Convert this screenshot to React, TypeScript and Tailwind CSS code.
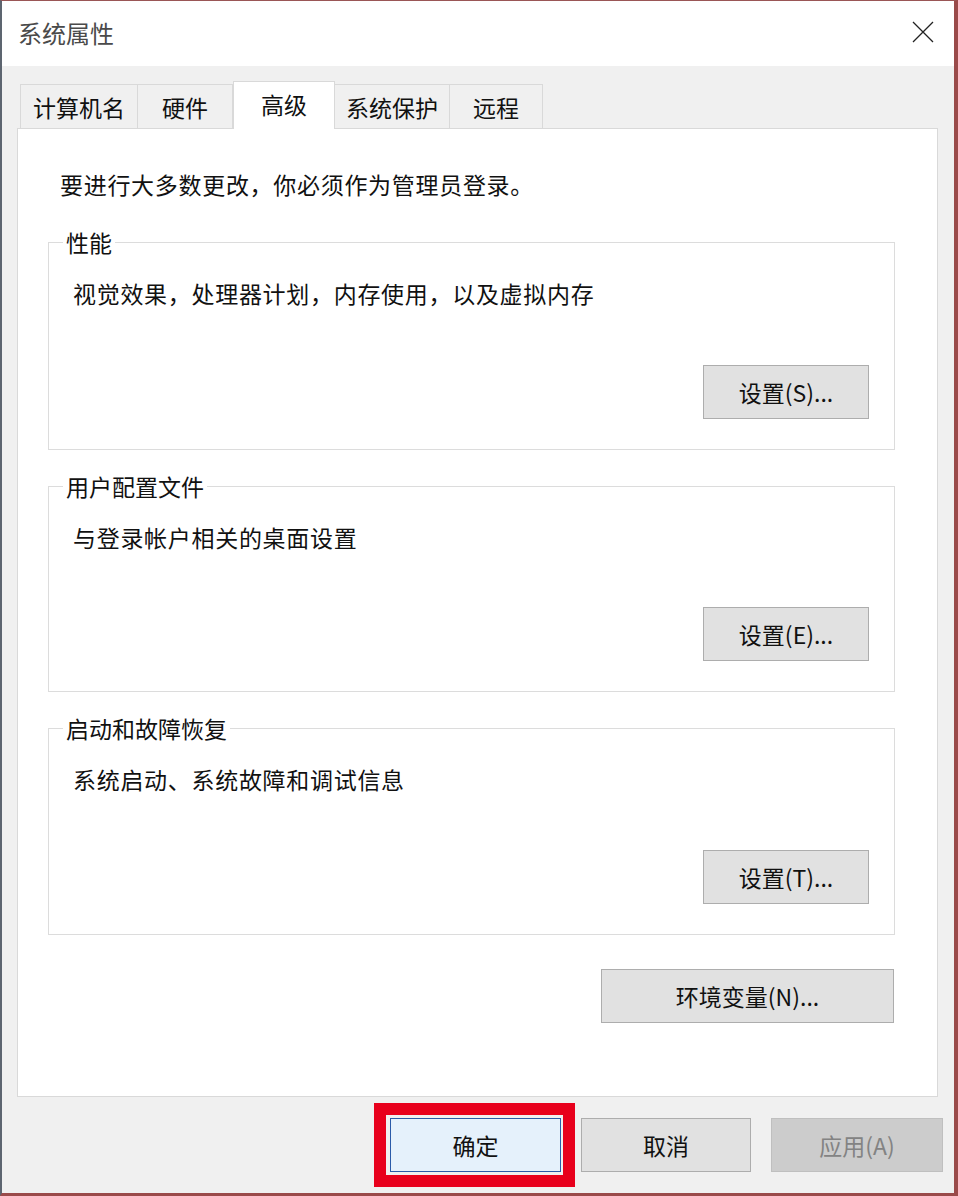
import React from "react";

const font = { fontFamily: '"Microsoft YaHei", "Noto Sans CJK SC", "Noto Sans", sans-serif' };

const tabs = [
  { label: "计算机名", w: "w-[118px]" },
  { label: "硬件", w: "w-[95px]" },
  { label: "高级", w: "w-[102px]", active: true },
  { label: "系统保护", w: "w-[115px]" },
  { label: "远程", w: "w-[93px]" },
];

function Btn({ children, className = "" }: { children: React.ReactNode; className?: string }) {
  return (
    <button
      className={`h-[54px] border border-[#adadad] bg-[#e1e1e1] text-[23px] text-[#111] flex items-center justify-center ${className}`}
    >
      {children}
    </button>
  );
}

function Group({ title, text, button, h }: { title: string; text: string; button: string; h: string }) {
  return (
    <div className={`relative border border-[#dcdcdc] flex flex-col ${h}`}>
      <span className="absolute -top-[16px] left-[14px] bg-white px-[3px] text-[23px] leading-[30px] text-[#111]">
        {title}
      </span>
      <p className="pt-[35px] pl-[24px] text-[23px] leading-[30px] tracking-[0.7px] text-[#111]">{text}</p>
      <div className="mt-auto mb-[30px] mr-[25px] flex justify-end">
        <Btn className="w-[166px]">{button}</Btn>
      </div>
    </div>
  );
}

export default function App() {
  return (
    <div
      style={font}
      className="w-[958px] h-[1196px] flex flex-col bg-[#f0f0f0] border-l-[2px] border-l-[#5d6570] border-t border-t-[#9a5656] border-r-[4px] border-r-[#9a4a4a] border-b-[3px] border-b-[#9a4a4a]"
    >
      {/* title bar */}
      <div className="h-[65px] bg-white flex items-center justify-between pl-[16px] pr-[20px] shrink-0">
        <span className="text-[24px] text-[#4a4a4a] -mt-[2px]">系统属性</span>
        <svg width="22" height="22" viewBox="0 0 22 22" className="-mt-[4px]">
          <path d="M1 1 L21 21 M21 1 L1 21" stroke="#222" strokeWidth="1.3" />
        </svg>
      </div>

      <div className="flex-1 flex flex-col pl-[15px] pr-[16px]">
        {/* tabs */}
        <div className="flex items-end pt-[14px] pl-[3px] h-[62px]">
          {tabs.map((t) =>
            t.active ? (
              <div
                key={t.label}
                className={`${t.w} h-[48px] bg-white border border-b-0 border-[#d9d9d9] -mb-[1px] relative z-10 flex justify-center pt-[5px] text-[23px] text-[#111]`}
              >
                {t.label}
              </div>
            ) : (
              <div
                key={t.label}
                className={`${t.w} h-[44px] bg-[#f0f0f0] border border-b-0 border-l-0 first:border-l border-[#d9d9d9] flex items-center justify-center pt-[2px] text-[23px] text-[#111]`}
              >
                {t.label}
              </div>
            )
          )}
        </div>

        {/* panel */}
        <div className="bg-white border border-[#d9d9d9] h-[969px] flex flex-col px-[30px]">
          <p className="pt-[40px] pl-[12px] text-[23px] leading-[30px] tracking-[0.7px] text-[#111]">
            要进行大多数更改，你必须作为管理员登录。
          </p>
          <div className="mt-[43px] mr-[12px] flex flex-col gap-[36px]">
            <Group title="性能" text="视觉效果，处理器计划，内存使用，以及虚拟内存" button="设置(S)..." h="h-[208px]" />
            <Group title="用户配置文件" text="与登录帐户相关的桌面设置" button="设置(E)..." h="h-[206px]" />
            <Group title="启动和故障恢复" text="系统启动、系统故障和调试信息" button="设置(T)..." h="h-[207px]" />
          </div>
          <div className="mt-[34px] mr-[13px] flex justify-end">
            <Btn className="w-[293px]">环境变量(N)...</Btn>
          </div>
        </div>

        {/* bottom buttons */}
        <div className="flex justify-end gap-[20px] pt-[21px] -mr-[5px]">
          <div className="relative">
            <Btn className="w-[171px] !border-[#2a5aa8] !bg-[#e5f1fb]">确定</Btn>
            <div className="absolute -left-[16px] -top-[15px] -right-[14px] -bottom-[15px] border-[12px] border-[#e8001c] pointer-events-none" />
          </div>
          <Btn className="w-[170px]">取消</Btn>
          <button className="w-[172px] h-[54px] border border-[#bfbfbf] bg-[#cccccc] text-[23px] text-[#838383] flex items-center justify-center">
            应用(A)
          </button>
        </div>
      </div>
    </div>
  );
}
